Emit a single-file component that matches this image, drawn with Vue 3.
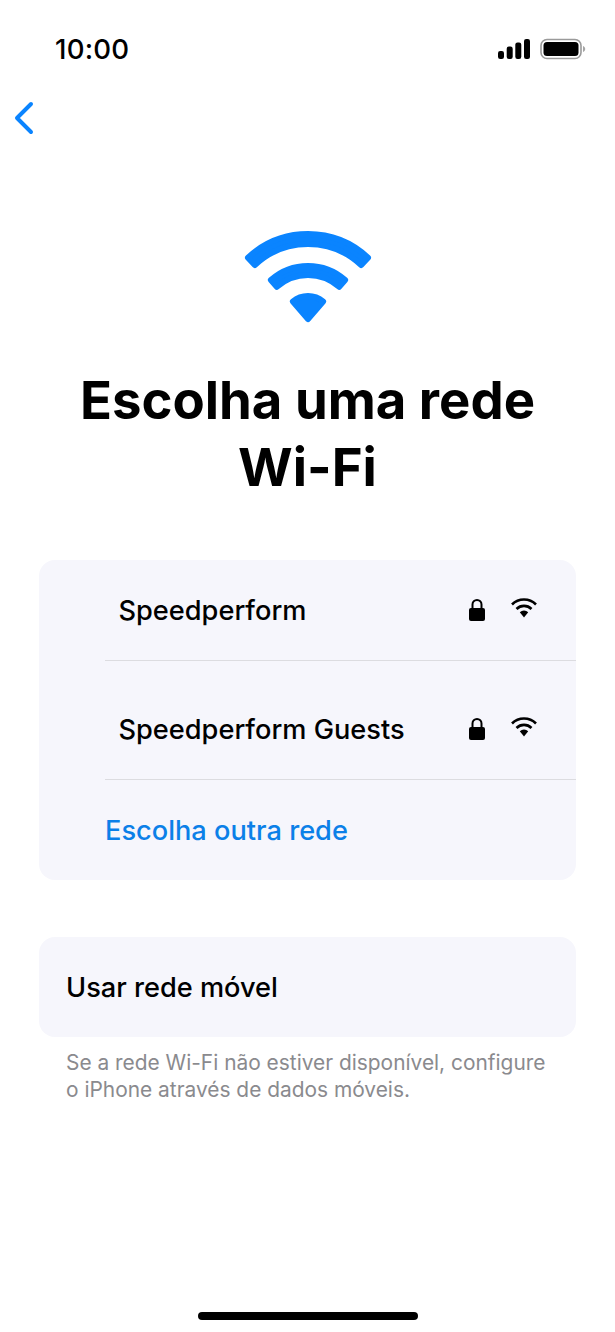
<script setup>
const networks = ['Speedperform', 'Speedperform Guests']
</script>

<template>
  <div class="page">
    <header class="status">
      <span class="time">10:00</span>
      <div class="status-icons">
        <svg class="signal" width="33" height="20" viewBox="0 0 33 20">
          <rect x="0" y="12" width="6" height="8" rx="2.200" />
          <rect x="8.700" y="7.500" width="6" height="12.500" rx="2.200" />
          <rect x="17.300" y="3.500" width="6" height="16.500" rx="2.200" />
          <rect x="26" y="0" width="6" height="20" rx="2.200" />
        </svg>
        <svg class="battery" width="46" height="22" viewBox="0 0 46 22">
          <rect x="1" y="1.500" width="40" height="19" rx="6" fill="none" stroke="#9a9a9a" stroke-width="1.600" />
          <rect x="3.500" y="4" width="35" height="14" rx="3.500" fill="#000" />
          <path d="M43 8v6c1.400-.5 2.200-1.700 2.200-3S44.400 8.500 43 8z" fill="#a5a5a5" />
        </svg>
      </div>
    </header>

    <nav class="nav">
      <svg width="24" height="36" viewBox="0 0 24 36">
        <path d="M19 4 5 18l14 14" fill="none" stroke="#0a84ff" stroke-width="4" stroke-linecap="round" stroke-linejoin="round" />
      </svg>
    </nav>

    <div class="hero">
      <svg width="136" height="102" viewBox="240 225 136 102">
        <g fill="#0a84ff" stroke="#0a84ff" stroke-width="6" stroke-linejoin="round">
          <path d="M248 257.700A88 88 0 0 1 368 257.700L361.200 265A78 78 0 0 0 254.800 265Z" />
          <path d="M270.900 280.100A56 56 0 0 1 345.100 280.100L339.200 286.800A47 47 0 0 0 276.800 286.800Z" />
          <path d="M292.900 301.600A23 23 0 0 1 323.100 301.600L308 319Z" />
        </g>
      </svg>
    </div>

    <h1 class="title">Escolha uma rede<br />Wi-Fi</h1>

    <section class="card networks">
      <div v-for="(name, i) in networks" :key="name" class="row" :class="{ first: i === 0 }">
        <span class="name">{{ name }}</span>
        <svg class="lock" width="16" height="22" viewBox="0 0 16 22">
          <path d="M3.500 10V5.500a4.500 4.500 0 0 1 9 0V10" fill="none" stroke="#000" stroke-width="2" />
          <rect x="0" y="9" width="16" height="13" rx="2" fill="#000" />
        </svg>
        <svg class="wifi" width="26" height="20" viewBox="0 0 26 20">
          <g fill="none" stroke="#000" stroke-width="2.600">
            <path d="M1 6.500a17 17 0 0 1 24 0" />
            <path d="M5.500 11a10.600 10.600 0 0 1 15 0" />
          </g>
          <path d="M8.800 14.200a6 6 0 0 1 8.400 0L13 19.500Z" fill="#000" />
        </svg>
      </div>
      <div class="other">Escolha outra rede</div>
    </section>

    <section class="card mobile">Usar rede móvel</section>

    <p class="note">Se a rede Wi-Fi não estiver disponível, configure<br />o iPhone através de dados móveis.</p>

    <div class="home"></div>
  </div>
</template>

<style>
html, body { margin: 0; background: #fff; }
</style>

<style scoped>
.page {
  width: 615px;
  height: 1332px;
  overflow: hidden;
  background: #fff;
  color: #000;
  font-family: Inter, "Noto Sans", "Liberation Sans", sans-serif;
  display: flex;
  flex-direction: column;
}
.status {
  height: 32px;
  margin-top: 33px;
  padding: 0 29px 0 55px;
  display: flex;
  justify-content: space-between;
  align-items: center;
}
.time { font-size: 27.600px; font-weight: 500; letter-spacing: 0.2px; }
.status-icons { display: flex; align-items: center; gap: 9px; }
.signal rect { fill: #000; }
.nav { height: 36px; margin-top: 35px; padding-left: 12px; }
.nav svg { display: block; }
.hero { margin-top: 89px; display: flex; justify-content: center; }
.hero svg { display: block; }
.title {
  margin: 40px 0 0;
  text-align: center;
  font-size: 52.700px;
  font-weight: 700;
  line-height: 67px;
  letter-spacing: 0;
}
.card {
  margin: 0 39px;
  background: #f6f6fc;
  border-radius: 16px;
}
.networks { margin-top: 59px; height: 320px; padding-left: 66px; box-sizing: border-box; }
.row {
  height: 119px;
  padding: 18px 39px 0 13.500px;
  display: flex;
  align-items: center;
  border-bottom: 1px solid #dcdce0;
  box-sizing: border-box;
}
.row.first { height: 101px; padding-top: 0; }
.name { flex: 1; font-size: 27.200px; font-weight: 500; }
.lock { display: block; margin-right: 26px; }
.wifi { display: block; margin-bottom: 4px; }
.other {
  height: 100px;
  display: flex;
  align-items: center;
  font-size: 27.200px;
  font-weight: 500;
  color: #0b80e8;
}
.mobile {
  margin-top: 57px;
  height: 100px;
  padding: 0 27px;
  display: flex;
  align-items: center;
  font-size: 27.200px;
  font-weight: 500;
}
.note {
  margin: 12px 66px 0;
  font-size: 20.900px;
  line-height: 27px;
  color: #8a8a8e;
  white-space: nowrap;
}
.home {
  margin: auto auto 12px;
  width: 220px;
  height: 8px;
  border-radius: 4px;
  background: #000;
}
</style>
